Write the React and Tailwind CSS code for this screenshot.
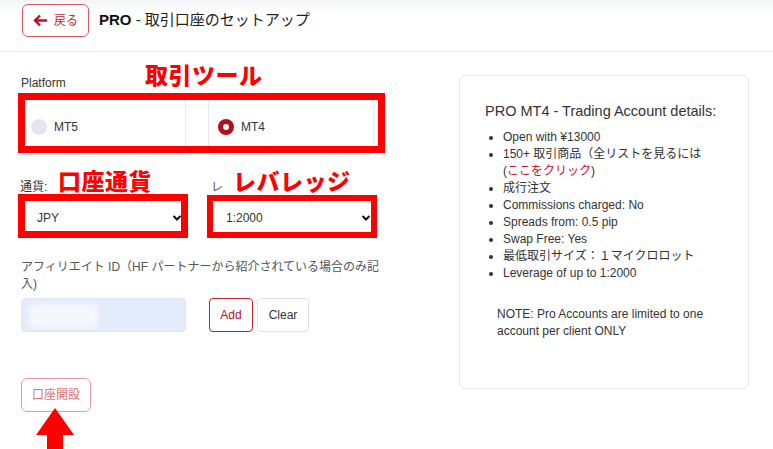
import React, { useState } from "react";

const font = { fontFamily: '"Liberation Sans", "Noto Sans CJK JP", sans-serif' };

const Chevron = () => (
  <svg className="pointer-events-none absolute right-[5px] top-1/2 -translate-y-1/2" width="10" height="7" viewBox="0 0 10 7">
    <path d="M1.5 1.5 L5 5 L8.5 1.5" fill="none" stroke="#111" strokeWidth="2" />
  </svg>
);

const RadioCard = ({ label, checked, onClick }) => (
  <button
    onClick={onClick}
    className="flex h-[57px] items-center gap-[7px] rounded-md border border-[#e6e8ef] bg-white pl-[9px] text-left text-[12px] text-[#333]"
  >
    {checked ? (
      <span className="flex h-[16px] w-[16px] items-center justify-center rounded-full bg-[#b0101c]">
        <span className="h-[6px] w-[6px] rounded-full bg-white" />
      </span>
    ) : (
      <span className="h-[16px] w-[16px] rounded-full bg-[#e3e6ee]" />
    )}
    <span>{label}</span>
  </button>
);

// red annotation text that sits over the form
const Note = ({ children, className }) => (
  <div
    className={`absolute bg-white text-[23px] font-black leading-[26px] tracking-[0.5px] text-[#ff0000] ${className}`}
    style={{ fontFamily: '"Noto Sans CJK JP", sans-serif' }}
  >
    {children}
  </div>
);

const App = () => {
  const [platform, setPlatform] = useState("MT4");
  const [currency, setCurrency] = useState("JPY");
  const [leverage, setLeverage] = useState("1:2000");

  return (
    <div className="relative h-[449px] w-[773px] overflow-hidden bg-white" style={font}>
      {/* Header */}
      <div className="flex h-[52px] items-start gap-[10px] border-b border-[#e8e9ec] bg-[linear-gradient(to_bottom,#f3f4f7,#ffffff_12px)] pl-[22px] pt-[4px]">
        <button className="flex h-[33px] w-[67px] items-center gap-[6px] rounded-md border border-[#d55a63] bg-white pl-[10px] text-[12px] text-[#c22a34]">
          <svg width="15" height="13" viewBox="0 0 15 13">
            <path d="M14 6.5 H2.5 M7 1.5 L2 6.5 L7 11.5" fill="none" stroke="#c0111f" strokeWidth="2.4" strokeLinejoin="miter" />
          </svg>
          <span>戻る</span>
        </button>
        <div className="mt-[6px] text-[15px] leading-[20px] text-[#222]">
          <span className="font-bold text-[#111]">PRO</span> - 取引口座のセットアップ
        </div>
      </div>

      <div className="flex">
        {/* Left form */}
        <div className="w-[459px] shrink-0 pl-[21px]">
          <div className="mt-[23px] text-[12px] leading-[16px] text-[#333]">Platform</div>
          <div className="mt-[7px] grid w-[354px] grid-cols-[165px_166px] gap-[22px]">
            <RadioCard label="MT5" checked={platform === "MT5"} onClick={() => setPlatform("MT5")} />
            <RadioCard label="MT4" checked={platform === "MT4"} onClick={() => setPlatform("MT4")} />
          </div>

          <div className="mt-[24px] grid w-[355px] grid-cols-[166px_166px] gap-[23px]">
            <div>
              <div className="-ml-px text-[12px] leading-[16px] text-[#333]">通貨:</div>
              <div className="relative mt-[5px]">
                <select
                  value={currency}
                  onChange={(e) => setCurrency(e.target.value)}
                  className="h-[36px] w-full appearance-none rounded border border-[#d9dce3] bg-white pl-[15px] text-[12px] text-[#333] outline-none"
                >
                  <option>JPY</option>
                  <option>USD</option>
                </select>
                <Chevron />
              </div>
            </div>
            <div>
              <div className="ml-[1px] text-[12px] leading-[16px] text-[#555]">レバレッジ:</div>
              <div className="relative mt-[5px]">
                <select
                  value={leverage}
                  onChange={(e) => setLeverage(e.target.value)}
                  className="h-[36px] w-full appearance-none rounded border border-[#d9dce3] bg-white pl-[15px] text-[12px] text-[#333] outline-none"
                >
                  <option>1:2000</option>
                  <option>1:1000</option>
                </select>
                <Chevron />
              </div>
            </div>
          </div>

          <div className="mt-[23px] w-[366px] text-[12px] leading-[17px] text-[#555]">
            アフィリエイト ID（HF パートナーから紹介されている場合のみ記入)
          </div>
          <div className="mt-[5px] flex items-center">
            <div className="relative h-[34px] w-[165px] rounded border border-[#dde4f4] bg-[#e4ebfb]">
              <div className="absolute left-[7px] top-[5px] h-[24px] w-[69px] rounded-sm bg-white/60 blur-[2px]" />
            </div>
            <button className="ml-[23px] h-[34px] w-[44px] rounded border border-[#c0202c] bg-white text-[12px] text-[#b8101d]">
              Add
            </button>
            <button className="ml-[4px] h-[34px] w-[52px] rounded border border-[#dfe1e6] bg-white text-[12px] text-[#333]">
              Clear
            </button>
          </div>

          <button className="mt-[46px] h-[34px] w-[70px] rounded-md border border-[#e79aa0] bg-white text-[12px] text-[#d8737b]">
            口座開設
          </button>
        </div>

        {/* Right details card */}
        <div className="mt-[23px] h-[314px] w-[290px] rounded-md border border-[#e4e6ec] pl-[25px] pt-[25px] text-[#333]">
          <div className="text-[14.5px] leading-[20px]">PRO MT4 - Trading Account details:</div>
          <ul className="mt-[8px] list-disc pl-[18px] text-[12px] leading-[17px]">
            <li>Open with ¥13000</li>
            <li>
              150+ 取引商品（全リストを見るには
              <br />(<span className="text-[#c4121f]">ここをクリック</span>)
            </li>
            <li>成行注文</li>
            <li>Commissions charged: No</li>
            <li>Spreads from: 0.5 pip</li>
            <li>Swap Free: Yes</li>
            <li>最低取引サイズ：１マイクロロット</li>
            <li>Leverage of up to 1:2000</li>
          </ul>
          <p className="ml-[12px] mt-[24px] w-[210px] text-[12px] leading-[17px]">
            NOTE: Pro Accounts are limited to one account per client ONLY
          </p>
        </div>
      </div>

      {/* Red annotation overlays */}
      <Note className="left-[143px] top-[61px] px-[2px]">取引ツール</Note>
      <Note className="left-[56px] top-[167px] px-[2px]">口座通貨</Note>
      <Note className="left-[222px] top-[167px] pl-[11px] pr-[2px]">レバレッジ</Note>
      <div className="absolute left-[18px] top-[93px] h-[60px] w-[367px] border-[7px] border-[#ff0000]" />
      <div className="absolute left-[18px] top-[194px] h-[44px] w-[170px] border-[7px] border-[#ff0000]" />
      <div className="absolute left-[207px] top-[195px] h-[43px] w-[170px] border-[6px] border-[#ff0000]" />
      <svg className="absolute left-[36px] top-[408px]" width="38" height="41" viewBox="0 0 38 41">
        <path d="M19 0 L38 27 L27 27 L27 41 L11 41 L11 27 L0 27 Z" fill="#ff0000" />
      </svg>
    </div>
  );
};

export default App;
